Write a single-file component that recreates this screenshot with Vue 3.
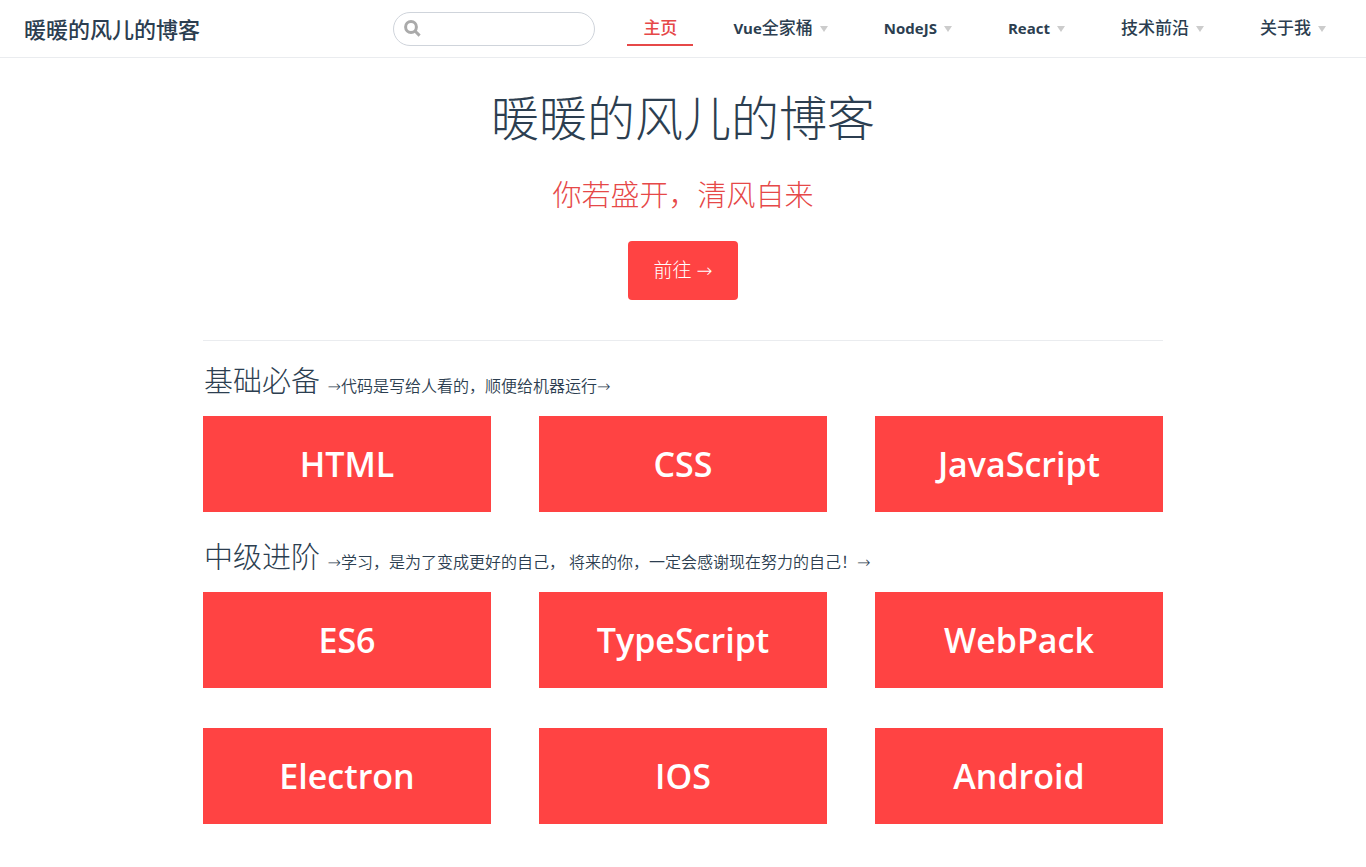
<script setup>
const navItems = [
  { text: '主页', active: true },
  { text: 'Vue', han: '全家桶', menu: true },
  { text: 'NodeJS', menu: true },
  { text: 'React', menu: true },
  { han: '技术前沿', menu: true },
  { han: '关于我', menu: true },
]

const sections = [
  {
    title: '基础必备',
    note: '→代码是写给人看的，顺便给机器运行→',
    cards: ['HTML', 'CSS', 'JavaScript'],
  },
  {
    title: '中级进阶',
    note: '→学习，是为了变成更好的自己， 将来的你，一定会感谢现在努力的自己！→',
    cards: ['ES6', 'TypeScript', 'WebPack', 'Electron', 'IOS', 'Android'],
  },
]
</script>

<template>
  <div class="page">
    <header class="navbar">
      <a class="brand" href="#">暖暖的风儿的博客</a>
      <div class="links">
        <label class="search">
          <svg viewBox="0 0 17 17" aria-hidden="true">
            <circle cx="7" cy="7" r="5.4" />
            <path d="M11 11L15.6 15.6" />
          </svg>
          <input type="search" aria-label="Search" />
        </label>
        <nav>
          <template v-for="item in navItems" :key="item.text || item.han">
            <button v-if="item.menu" class="item" type="button">
              <span>{{ item.text }}<span class="han">{{ item.han }}</span></span>
              <span class="caret"></span>
            </button>
            <a v-else class="item active" href="#"><span class="han">{{ item.text }}</span></a>
          </template>
        </nav>
      </div>
    </header>

    <main>
      <section class="hero">
        <h1>暖暖的风儿的博客</h1>
        <p>你若盛开，清风自来</p>
        <a class="action" href="#">前往 →</a>
      </section>

      <section v-for="section in sections" :key="section.title" class="group">
        <h2>{{ section.title }} <small>{{ section.note }}</small></h2>
        <div class="cards">
          <a v-for="card in section.cards" :key="card" class="card" href="#">{{ card }}</a>
        </div>
      </section>
    </main>
  </div>
</template>

<style>
body {
  margin: 0;
  background: #fff;
}
</style>

<style scoped>
.page {
  color: #2c3e50;
  font-family: "Open Sans", "DejaVu Sans", "Noto Sans CJK SC", sans-serif;
  font-size: 16px;
}

a {
  color: inherit;
  text-decoration: none;
}

.navbar {
  display: flex;
  align-items: center;
  justify-content: space-between;
  box-sizing: border-box;
  height: 58px;
  padding: 0 24px;
  border-bottom: 1px solid #eaecef;
}

.brand {
  font-size: 22px;
  font-weight: 500;
  line-height: 28px;
  white-space: nowrap;
}

.links,
nav {
  display: flex;
  align-items: center;
}

.links {
  gap: 32px;
}

nav {
  gap: 24px;
}

.search {
  display: flex;
  align-items: center;
  box-sizing: border-box;
  width: 202px;
  height: 34px;
  padding: 0 12px 0 10px;
  gap: 8px;
  border: 1px solid #cfd4db;
  border-radius: 17px;
}

.search svg {
  flex: none;
  width: 17px;
  height: 17px;
  fill: none;
  stroke: #aaa;
  stroke-width: 3;
}

.search input {
  flex: 1;
  min-width: 0;
  padding: 0;
  border: 0;
  outline: 0;
  background: none;
  font: inherit;
}

.item {
  display: flex;
  align-items: center;
  box-sizing: border-box;
  height: 34px;
  padding: 0 16px;
  border: 0;
  border-bottom: 2px solid transparent;
  background: none;
  color: #2c3e50;
  font: inherit;
  font-size: 15px;
  font-weight: 700;
  line-height: 32px;
  white-space: nowrap;
}

.han {
  font-size: 17px;
  font-weight: 500;
}

.item.active {
  border-color: #e64848;
  color: #e64848;
}

.caret {
  margin: 2px 0 0 7px;
  border: 4px solid transparent;
  border-top: 6px solid #ccc;
  border-bottom: 0;
}

main {
  max-width: 960px;
  margin: 0 auto;
}

.hero {
  display: flex;
  flex-direction: column;
  align-items: center;
  padding: 32px 0 40px;
  border-bottom: 1px solid #eaecef;
  font-weight: 300;
}

h1 {
  margin: 0;
  font-size: 48px;
  font-weight: 300;
  line-height: 56px;
}

.hero p {
  margin: 30px 0 28px;
  color: #e64848;
  font-size: 29px;
  line-height: 37px;
}

.action {
  padding: 0 26px;
  border-radius: 4px;
  background: #ff4343;
  color: #fff;
  font-size: 19px;
  line-height: 59px;
}

h2 {
  margin: 0;
  padding-left: 1px;
  font-size: 29px;
  font-weight: 300;
  line-height: 40px;
}

.group {
  padding-top: 20px;
}

.group + .group {
  padding-top: 25px;
}

small {
  font-size: 16px;
  font-weight: 350;
  line-height: 16px;
}

.cards {
  display: grid;
  grid-template-columns: repeat(3, 1fr);
  gap: 40px 48px;
  margin-top: 15px;
}

.card {
  background: #ff4343;
  color: #fff;
  font-size: 34px;
  font-weight: 600;
  line-height: 96px;
  text-align: center;
}
</style>
